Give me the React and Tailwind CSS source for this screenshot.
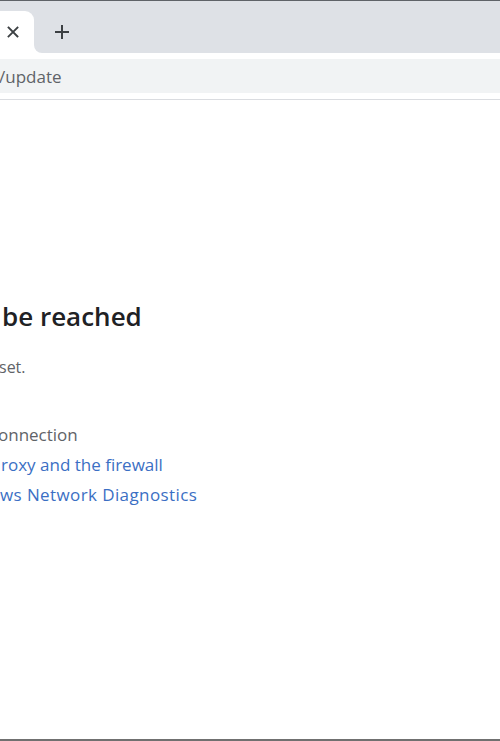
export default function App() {
  const font = { fontFamily: '"Open Sans", "Noto Sans", sans-serif' };
  return (
    <div className="w-[500px] h-[741px] overflow-hidden bg-white flex flex-col" style={font}>
      <div className="h-px bg-[#5f6368]" />
      {/* tab strip */}
      <div className="h-[52px] bg-[#dee1e6] flex items-end relative">
        <div className="relative w-[34px] h-[42px] bg-white rounded-tr-[9px] flex items-center justify-center text-[#3c4043]">
          <svg width="12" height="12" viewBox="0 0 12 12" className="ml-[-8px]">
            <path d="M1.5 1.5 L10.5 10.5 M10.5 1.5 L1.5 10.5" stroke="#3c4043" strokeWidth="1.8" strokeLinecap="square" />
          </svg>
          <div className="absolute right-[-8px] bottom-0 w-[8px] h-[8px] bg-white">
            <div className="w-full h-full bg-[#dee1e6] rounded-bl-[8px]" />
          </div>
        </div>
        <div className="ml-[18px] mb-[11px] w-[20px] h-[20px] flex items-center justify-center">
          <svg width="16" height="16" viewBox="0 0 16 16">
            <path d="M8 1 V15 M1 8 H15" stroke="#3c4043" strokeWidth="2" />
          </svg>
        </div>
      </div>
      {/* toolbar */}
      <div className="h-[46px] bg-white flex items-center">
        <div className="h-[34px] w-full bg-[#f1f3f4] flex items-center">
          <span className="text-[17px] text-[#5f6368] ml-[-1px] mt-[1px]">/update</span>
        </div>
      </div>
      <div className="h-px bg-[#dadce0]" />
      {/* content */}
      <div className="flex-1 bg-white flex flex-col">
        <div className="mt-[200px] pl-[2px] text-[26px] font-semibold text-[#202124] leading-[32px]">be reached</div>
        <div className="mt-[25px] text-[16px] text-[#5f6368] leading-[20px] ml-[-1px]">set.</div>
        <div className="mt-[48px] text-[17px] text-[#5f6368] leading-[20px] ml-[-2px]">onnection</div>
        <div className="mt-[10px] text-[17px] text-[#3b6fc4] leading-[20px] ml-[1px]">roxy and the firewall</div>
        <div className="mt-[10px] text-[17px] text-[#3b6fc4] leading-[20px] ml-[0px] tracking-[0.4px]">ws Network Diagnostics</div>
      </div>
      <div className="h-[2px] bg-[#707070]" />
    </div>
  );
}
